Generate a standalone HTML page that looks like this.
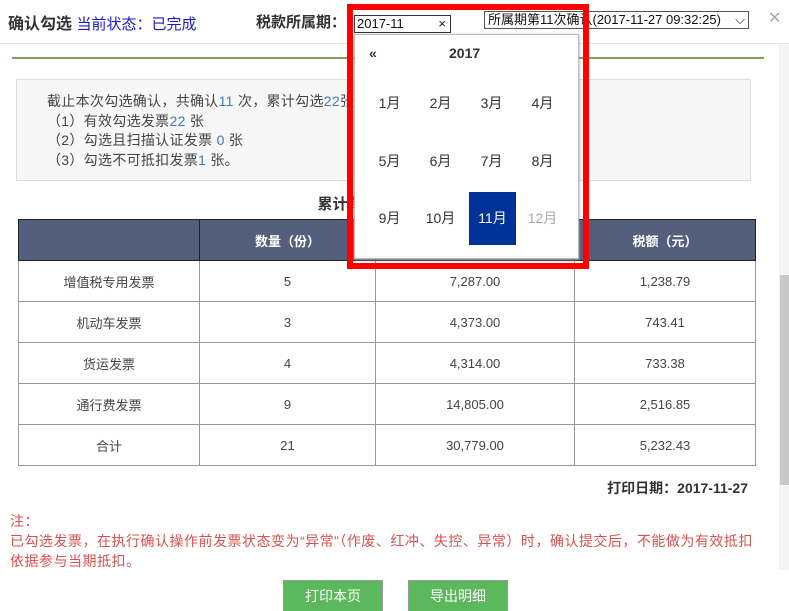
<!DOCTYPE html>
<html><head><meta charset="utf-8"><style>
*{margin:0;padding:0;box-sizing:border-box}
body{width:789px;height:611px;overflow:hidden;background:#fff;font-family:"Liberation Sans","Noto Sans CJK SC",sans-serif;color:#333;position:relative;font-size:13px}
.a{position:absolute}
.hdr{left:0;top:0;width:789px;height:44px;border-bottom:1px solid #e5e5e5}
td,th{border:1px solid #999;text-align:center;font-size:13px;color:#444;height:41px}
th{background:#535f7c;color:#fff;font-weight:bold;border-color:#222}
table{border-collapse:collapse;position:absolute;left:18px;top:219px;width:738px}
.b{color:#3a7cc0}
.mo{position:absolute;width:47px;height:53px;line-height:53px;text-align:center;font-size:14px;color:#333}
.btn{position:absolute;top:580px;width:100px;height:31px;background:#5cb85c;color:#fff;font-size:14px;text-align:center;line-height:30px;border:1px solid #999;border-bottom:none}
</style></head><body>
<div class="a hdr"></div>
<div class="a" style="left:8px;top:10px;font-size:16px;font-weight:bold;color:#333">确认勾选 <span style="font-weight:normal;color:#1a1acc;font-size:15px">当前状态：已完成</span></div>
<div class="a" style="left:256px;top:11px;font-size:15px;font-weight:bold;color:#333">税款所属期：</div>
<div class="a" style="left:484px;top:11px;width:265px;height:18px;border:1px solid #555;font-size:13px;line-height:16px;padding-left:3px;color:#111;white-space:nowrap;overflow:hidden">所属期第11次确认(2017-11-27 09:32:25)<span style="position:absolute;right:3px;top:0">⌵</span></div>
<div class="a" style="left:768px;top:8px;font-size:16px;color:#aaa">✕</div>
<div class="a" style="left:779px;top:44px;width:10px;height:526px;background:#f4f4f4"></div>
<div class="a" style="left:780px;top:275px;width:9px;height:210px;background:#c8c8c8"></div>
<div class="a" style="left:12px;top:57px;width:752px;height:2px;background:#7ca35a"></div>
<div class="a" style="left:16px;top:79px;width:735px;height:102px;background:#f7f7f7;border:1px solid #ddd"></div>
<div class="a" style="left:47px;top:92px;line-height:19.5px;font-size:14px;letter-spacing:0.3px;color:#444">截止本次勾选确认，共确认<span class="b">11</span> 次，累计勾选<span class="b">22</span>张<br>（1）有效勾选发票<span class="b">22</span> 张<br>（2）勾选且扫描认证发票 <span class="b">0</span> 张<br>（3）勾选不可抵扣发票<span class="b">1</span> 张。</div>
<div class="a" style="left:0;width:770px;top:193px;text-align:center;font-size:15px;font-weight:bold;color:#333">累计有效勾选统计表</div>
<table>
<tr><th style="width:181px"></th><th style="width:176px">数量（份）</th><th style="width:199px">金额（元）</th><th>税额（元）</th></tr>
<tr><td>增值税专用发票</td><td>5</td><td>7,287.00</td><td>1,238.79</td></tr>
<tr><td>机动车发票</td><td>3</td><td>4,373.00</td><td>743.41</td></tr>
<tr><td>货运发票</td><td>4</td><td>4,314.00</td><td>733.38</td></tr>
<tr><td>通行费发票</td><td>9</td><td>14,805.00</td><td>2,516.85</td></tr>
<tr><td>合计</td><td>21</td><td>30,779.00</td><td>5,232.43</td></tr>
</table>
<div class="a" style="right:41px;top:478px;font-size:14px;font-weight:bold;color:#333">打印日期：2017-11-27</div>
<div class="a" style="left:10px;top:511px;font-size:14px;letter-spacing:0.5px;color:#d9534f;line-height:20px;white-space:nowrap">注：<br>已勾选发票，在执行确认操作前发票状态变为“异常”（作废、红冲、失控、异常）时，确认提交后，不能做为有效抵扣<br>依据参与当期抵扣。</div>
<div class="btn" style="left:283px">打印本页</div>
<div class="btn" style="left:408px">导出明细</div>
<div class="a" style="left:354px;top:34px;width:225px;height:225px;background:#fff;border:1px solid #bbb;box-shadow:0 1px 3px #999"></div>
<div class="a" style="left:369px;top:45px;font-size:14px;font-weight:bold;color:#333">«</div>
<div class="a" style="left:449px;top:45px;font-size:14px;font-weight:bold;color:#333">2017</div>
<div class="mo" style="left:366px;top:77px">1月</div><div class="mo" style="left:417px;top:77px">2月</div><div class="mo" style="left:468px;top:77px">3月</div><div class="mo" style="left:519px;top:77px">4月</div>
<div class="mo" style="left:366px;top:135px">5月</div><div class="mo" style="left:417px;top:135px">6月</div><div class="mo" style="left:468px;top:135px">7月</div><div class="mo" style="left:519px;top:135px">8月</div>
<div class="mo" style="left:366px;top:192px">9月</div><div class="mo" style="left:417px;top:192px">10月</div><div class="mo" style="left:469px;top:192px;background:#003399;color:#fff">11月</div><div class="mo" style="left:519px;top:192px;color:#aaa">12月</div>
<div class="a" style="left:354px;top:15px;width:97px;height:18px;border:1px solid #333;background:#fff;font-size:13px;line-height:16px;padding-left:2px;color:#111">2017-11<span style="position:absolute;right:4px;top:0">×</span></div>
<div class="a" style="left:347px;top:4px;width:242px;height:265px;border:6px solid #f00"></div>
</body></html>
